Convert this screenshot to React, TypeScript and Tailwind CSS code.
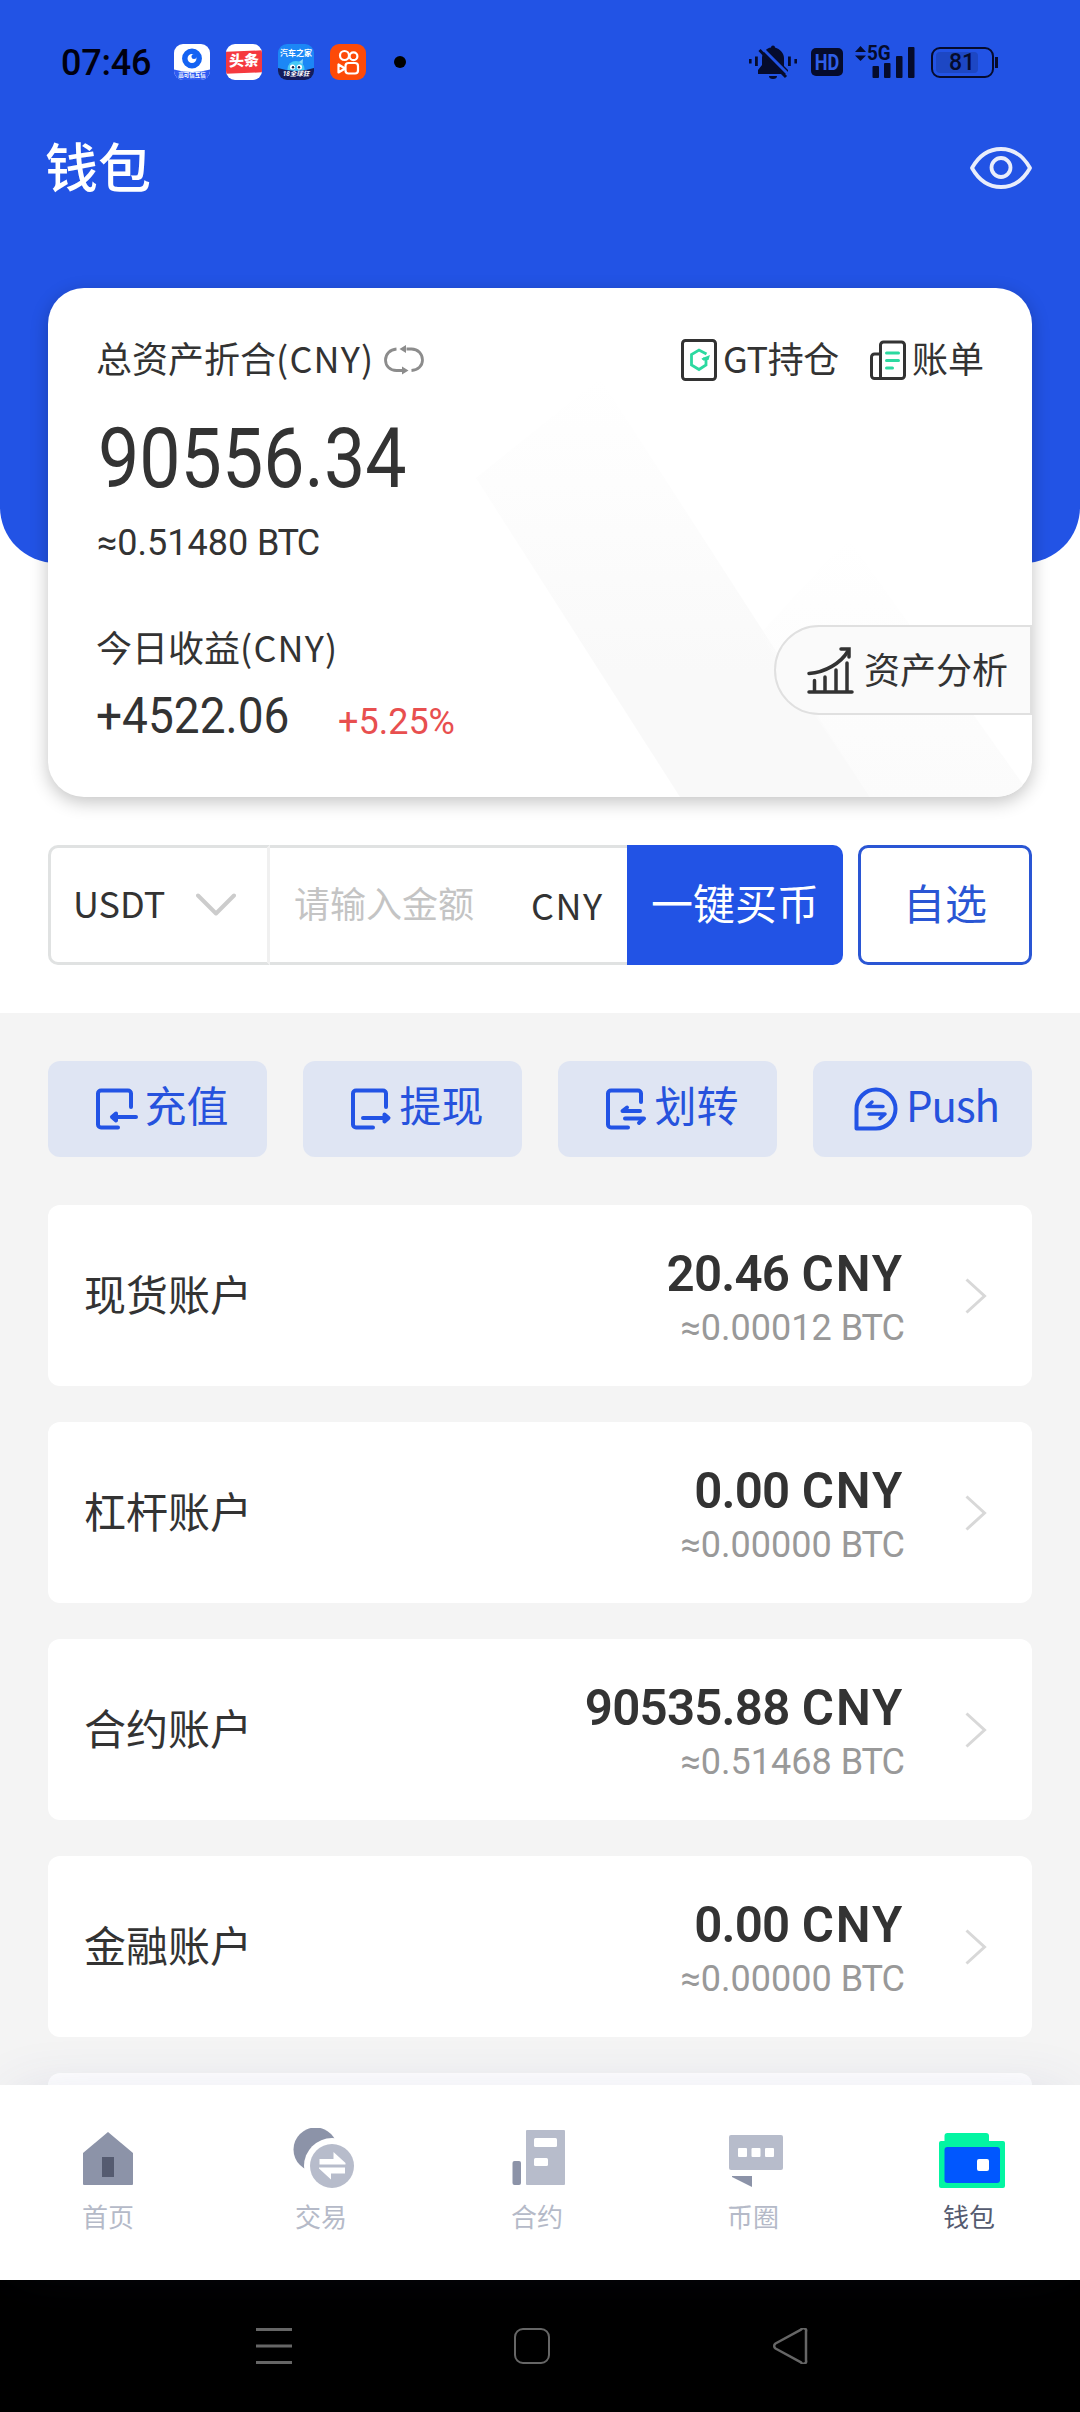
import type { ReactNode } from 'react';

const BLUE = '#2253e5';

const ACCOUNTS = [
  { name: '现货账户', amount: '20.46', btc: '≈0.00012 BTC' },
  { name: '杠杆账户', amount: '0.00', btc: '≈0.00000 BTC' },
  { name: '合约账户', amount: '90535.88', btc: '≈0.51468 BTC' },
  { name: '金融账户', amount: '0.00', btc: '≈0.00000 BTC' },
];

/* ---------- status bar ---------- */

function AppBadges() {
  return (
    <div className="flex items-center gap-4">
      <div className="relative h-9 w-9 overflow-hidden rounded-[9px] bg-white">
        <svg className="h-9 w-9" viewBox="0 0 36 36">
          <circle cx="18" cy="14.500" r="7.200" fill="none" stroke="#1463f3" strokeWidth="5.500" />
          <circle cx="20" cy="12.500" r="2.500" fill="#1463f3" />
          <path d="M0 25.500q18 5 36 0V36H0z" fill="#2f5bf2" />
        </svg>
        <div className="absolute inset-x-0 bottom-0 text-center text-[5.5px] leading-[9px] font-bold whitespace-nowrap text-white">高可信互信</div>
      </div>
      <div className="flex h-9 w-9 items-center overflow-hidden rounded-[9px] bg-white">
        <div className="flex h-[22px] w-9 shrink-0 -skew-y-2 justify-center bg-[#f5393f] text-[15px] leading-[21px] font-black whitespace-nowrap text-white">头条</div>
      </div>
      <div className="flex h-9 w-9 flex-col items-center overflow-hidden rounded-[9px] bg-[#1c87f6]">
        <div className="mt-1 h-[11px] shrink-0 text-[8px] leading-[11px] font-bold whitespace-nowrap text-white">汽车之家</div>
        <svg className="h-[12px] w-9 shrink-0" viewBox="0 0 36 12">
          <ellipse cx="18" cy="10" rx="8.500" ry="8" fill="#45c8f5" />
          <path d="M21 3 25 0l-.5 5z" fill="#8fdcf8" />
          <circle cx="14.500" cy="8" r="2.600" fill="#fff" />
          <circle cx="21.500" cy="8" r="2.600" fill="#fff" />
          <circle cx="15" cy="8.300" r="1.200" fill="#10204a" />
          <circle cx="21" cy="8.300" r="1.200" fill="#10204a" />
          <path d="M0 9q18 6 36 0v3H0z" fill="#141c5c" />
        </svg>
        <div className="h-[10px] w-9 shrink-0 bg-[#141c5c] text-center text-[6.5px] leading-[7px] font-bold text-white italic">18全球狂</div>
      </div>
      <svg className="h-9 w-9" viewBox="0 0 36 36" fill="none" stroke="#fff" strokeWidth="2.2">
        <rect width="36" height="36" rx="9" fill="#fd4a08" stroke="none" />
        <circle cx="14.500" cy="11.500" r="4.500" />
        <circle cx="23.500" cy="12.200" r="3.900" />
        <rect x="15.500" y="19" width="12.500" height="10.500" rx="3" />
        <path d="M15 24.500 8.500 20.500v8z" strokeLinejoin="round" />
      </svg>
    </div>
  );
}

function StatusBar() {
  return (
    <div className="flex h-[124px] items-center pr-[82px] pl-[61px] text-[#000010]">
      <span className="w-[113px] pt-0.5 text-4xl font-medium tracking-[-0.2px]">07:46</span>
      <AppBadges />
      <div className="ml-7 h-3 w-3 rounded-full bg-black" />

      <svg className="ml-auto h-[34px] w-12" viewBox="0 0 48 34" fill="#050b2c">
        <path d="M9 29v-4l4-5v-7C13 7 18 3 22 2.500a2 2 0 0 1 4 0C31 4 35 8 35 13v8l4 4v4z" />
        <path d="M20 31h8a4 3 0 0 1-8 0z" />
        <rect x="0" y="14" width="2.600" height="4.500" />
        <rect x="6" y="11.500" width="2.800" height="9.500" />
        <rect x="39" y="11.500" width="2.800" height="9.500" />
        <rect x="45.400" y="14" width="2.600" height="4.500" />
        <path d="M13 3 41 31" stroke={BLUE} strokeWidth="3" />
        <path d="M10.500 5 37 32" stroke="#050b2c" strokeWidth="3" />
      </svg>

      <div className="ml-3.5 flex h-7 w-8 justify-center rounded-[5px] bg-[#050b2c] font-[Roboto] text-[22px] leading-[29px] font-bold text-[#2f5fe8]">
        <span className="inline-block scale-x-[0.82]">HD</span>
      </div>

      <div className="relative ml-3 h-[34px] w-[61px]">
        <svg className="h-[34px] w-[61px]" viewBox="0 0 61 34" fill="#050b2c">
          <path d="M0 7 5.500 1 11 7z" />
          <path d="M0 10.500h11L5.500 16z" />
          <rect x="17.500" y="21" width="6.500" height="12" rx="1" />
          <rect x="29" y="18" width="6.500" height="15" rx="1" />
          <rect x="41" y="11" width="6.500" height="22" rx="1" />
          <rect x="53" y="2" width="6.500" height="31" rx="1" />
        </svg>
        <span className="absolute top-0 left-3 origin-left scale-x-90 font-[Roboto] text-[21px] leading-[17px] font-bold text-[#050b2c]">5G</span>
      </div>

      <div className="ml-[15px] flex items-center gap-px">
        <div className="flex h-[31px] w-[63px] items-center rounded-[9px] border-2 border-[#050b2c] p-[3px]">
          <div className="h-full w-[42px] rounded-[4px] bg-[#1d47c4] pl-[13px] font-[Roboto] text-[23px] leading-[22px] font-medium text-[#050b2c]">
            81
          </div>
        </div>
        <div className="h-[11px] w-[3px] bg-[#050b2c]" />
      </div>
    </div>
  );
}

/* ---------- asset card ---------- */

function CardPattern() {
  return (
    <svg className="absolute inset-0 h-full w-full" viewBox="0 0 984 509">
      <defs>
        <linearGradient id="bandA" x1="0" y1="0" x2="0" y2="1">
          <stop offset="0" stopColor="#f9f9f9" stopOpacity="0" />
          <stop offset="0.300" stopColor="#f9f9f9" stopOpacity="0.400" />
          <stop offset="0.700" stopColor="#f9f9f9" />
          <stop offset="1" stopColor="#f9f9f9" />
        </linearGradient>
        <linearGradient id="bandB" x1="0" y1="0" x2="0" y2="1">
          <stop offset="0" stopColor="#fbfbfb" stopOpacity="0" />
          <stop offset="1" stopColor="#fbfbfb" />
        </linearGradient>
      </defs>
      <path d="M552 90 822 509H632L428 190z" fill="url(#bandA)" />
      <path d="M822 509 712 346 800 250 984 509z" fill="url(#bandB)" />
    </svg>
  );
}

function AssetCard() {
  return (
    <section className="relative mx-12 -mt-[275px] h-[509px] rounded-[36px] bg-white text-[#333] shadow-[0_5px_18px_rgba(0,0,0,0.24)]">
      <div className="absolute inset-0 overflow-hidden rounded-[36px]">
        <CardPattern />
      </div>
      <div className="relative flex h-full flex-col">
        <div className="mt-[45px] flex h-[54px] items-center pr-12 pl-12 text-4xl">
          <span className="-mt-1.5 w-[288px] whitespace-nowrap">
            总资产折合<span className="tracking-[1.2px]">(CNY)</span>
          </span>
          <svg className="h-[30px] w-10" viewBox="0 0 40 30" fill="none" stroke="#8c8c8c" strokeWidth="2.800">
            <path d="M12.500 4C6 4.500 1.500 9 1.500 15c0 6 4.500 10.500 11 10.500h6" />
            <path d="M27.500 25.500C34 25 38.500 21 38.500 15c0-6-4.500-11-11-11h-5" />
            <path d="M15.500 4 22 0v8z" fill="#8c8c8c" stroke="none" />
            <path d="M24.500 25.500 18 21.500v8z" fill="#8c8c8c" stroke="none" />
          </svg>

          <svg className="ml-auto h-[42px] w-9" viewBox="0 0 36 42" fill="none">
            <rect x="1.500" y="1.500" width="33" height="39" rx="3" stroke="#333" strokeWidth="3" />
            <path d="M25.500 15 18 11 10.500 15.500v10.500L18 30.500l7-4.500v-6h-3" stroke="#2cd9a0" strokeWidth="2.800" />
            <path d="M20.500 19.500 29 16l-1.500 5h-6z" fill="#2cd9a0" />
          </svg>
          <span className="-mt-1.5 ml-1.5 w-[117px] tracking-[-0.4px] whitespace-nowrap">GT持仓</span>
          <svg className="ml-[30px] h-[40px] w-9" viewBox="0 0 36 40" fill="none" strokeWidth="3">
            <path d="M10.500 14H4.500a3 3 0 0 0-3 3v18.500a3 3 0 0 0 3 3h27a3 3 0 0 0 3-3V5a3 3 0 0 0-3-3h-18a3 3 0 0 0-3 3v33" stroke="#333" />
            <path d="M16.500 13h12M16.500 20.500h12M16.500 28h6" stroke="#2cd9a0" strokeLinecap="round" />
          </svg>
          <span className="-mt-1.5 ml-1.5">账单</span>
        </div>

        <div className="mt-[24px] ml-[50px] h-[96px] origin-left scale-x-[0.875] font-[Roboto] text-[84px] leading-[96px] font-[450]">
          90556.34
        </div>
        <div className="mt-[15px] ml-[49px] h-[42px] font-[Roboto] text-4xl leading-[42px]">
          ≈0.51480 <span className="tracking-[-1.6px]">BTC</span>
        </div>

        <div className="mt-[56px] flex items-start justify-between">
          <div className="pl-12">
            <div className="h-[54px] text-4xl leading-[53px]">
              今日收益<span className="tracking-[1.2px]">(CNY)</span>
            </div>
            <div className="mt-[12px] flex h-[60px] font-[Roboto]">
              <span className="w-[242px] origin-left scale-x-[0.92] text-[50px] leading-[60px]">+4522.06</span>
              <span className="pt-[6px] text-4xl leading-[60px] text-[#e84f4f]">+5.25%</span>
            </div>
          </div>
          <div className="mt-[5px] flex h-[90px] w-[258px] items-center rounded-l-full border-2 border-[#e0e0e0] bg-[#fafafa] pl-[31px]">
            <svg className="h-[47px] w-[47px]" viewBox="0 0 47 47" fill="none" stroke="#333" strokeWidth="3.500" strokeLinecap="round">
              <path d="M2 45h43M7.500 45V33.500M18 45V30M29 45V23M40 45V16" />
              <path d="M2 26.500C18 25.500 34 16 41 4" />
              <path d="M34 2h8v8" />
            </svg>
            <span className="-mt-1 ml-[10px] text-4xl">资产分析</span>
          </div>
        </div>
      </div>
    </section>
  );
}

/* ---------- quick buy ---------- */

function QuickBuy() {
  return (
    <section className="mx-12 mt-12 flex h-[120px] text-4xl text-[#333]">
      <div className="flex w-[222px] items-center rounded-l-[10px] border-[3px] border-[#e0e2e2] border-r-[#f0f0f0] pl-[22px]">
        <span className="-mt-1.5 w-[123px]">USDT</span>
        <svg className="h-6 w-10" viewBox="0 0 40 24" fill="none" stroke="#ccc" strokeWidth="4" strokeLinecap="round" strokeLinejoin="round">
          <path d="M2 2.500 20 20.500 38 2.500" />
        </svg>
      </div>
      <div className="flex w-[357px] items-center border-y-[3px] border-[#e0e2e2] pl-6">
        <span className="-mt-1.5 w-[237px] text-[#c4c4c4]">请输入金额</span>
        <span className="-mt-0.5 tracking-[1.5px]">CNY</span>
      </div>
      <button className="w-[216px] rounded-r-[10px] bg-[#2253e5] pb-1.5 text-[42px] leading-none text-white">一键买币</button>
      <button className="ml-[15px] w-[174px] rounded-[10px] border-[3px] border-[#2a56d4] pb-1.5 text-[42px] leading-none text-[#2a56d4]">自选</button>
    </section>
  );
}

/* ---------- actions ---------- */

function ActionButton({ icon, label }: { icon: ReactNode; label: string }) {
  return (
    <button className="flex h-24 flex-1 items-center justify-center rounded-[12px] bg-[#dfe5f3] pl-2 text-[42px] leading-none text-[#2652dd]">
      {icon}
      <span className={label === 'Push' ? '-mt-2.5 tracking-[-1px]' : '-mt-2.5'}>{label}</span>
    </button>
  );
}

function Actions() {
  const common = { viewBox: '0 0 44 44', fill: 'none', stroke: BLUE, strokeWidth: 4, strokeLinecap: 'round', strokeLinejoin: 'round' } as const;
  return (
    <div className="flex gap-9">
      <ActionButton
        label="充值"
        icon={
          <svg {...common} className="mr-1.5 h-11 w-11">
            <path d="M37 20V6.500a3 3 0 0 0-3-3H7a3 3 0 0 0-3 3v31a3 3 0 0 0 3 3h17" />
            <path d="M42 30H18M22 26.500 18 30l4 3.500z" />
          </svg>
        }
      />
      <ActionButton
        label="提现"
        icon={
          <svg {...common} className="mr-1.5 h-11 w-11">
            <path d="M37 20V6.500a3 3 0 0 0-3-3H7a3 3 0 0 0-3 3v31a3 3 0 0 0 3 3h17" />
            <path d="M14 31h25M35.500 27.500 39.500 31l-4 3.500z" />
          </svg>
        }
      />
      <ActionButton
        label="划转"
        icon={
          <svg {...common} className="mr-1.5 h-11 w-11">
            <path d="M37 15V6.500a3 3 0 0 0-3-3H7a3 3 0 0 0-3 3v31a3 3 0 0 0 3 3h17" />
            <path d="M36 24H18.500L23 20.500M21 31.500h19L35 36" />
          </svg>
        }
      />
      <ActionButton
        label="Push"
        icon={
          <svg {...common} className="mr-2 h-11 w-11">
            <path d="M2.500 41.500V22A19.500 19.500 0 1 1 22 41.500z" />
            <path d="M29 19.500H13l5-4.500M15 27h16l-5 4.500" strokeWidth="3.500" />
          </svg>
        }
      />
    </div>
  );
}

/* ---------- account list ---------- */

function AccountRow({ name, amount, btc }: { name: string; amount: string; btc: string }) {
  return (
    <div className="flex h-[181px] shrink-0 items-center rounded-[12px] bg-white pr-[45px] pl-9">
      <span className="-mt-1.5 text-[42px] leading-none text-[#333]">{name}</span>
      <div className="ml-auto flex flex-col items-end pt-1.5 font-[Roboto]">
        <span className="h-[57px] origin-right scale-x-[0.985] text-[50px] leading-[57px] font-semibold text-[#333]">
          <span className="tracking-[-0.8px]">{amount}</span> <span className="tracking-[2px]">CNY</span>
        </span>
        <span className="h-[49px] text-4xl leading-[50px] text-[#999]">
          {btc.slice(0, -3)}
          <span className="tracking-[-1px]">{btc.slice(-3)}</span>
        </span>
      </div>
      <svg className="ml-[61px] h-9 w-[22px]" viewBox="0 0 22 36" fill="none" stroke="#d8d8d8" strokeWidth="3">
        <path d="M1.500 1.500 19.500 18 1.500 34.500" />
      </svg>
    </div>
  );
}

/* ---------- bottom tabs ---------- */

function Tab({ label, active, first, children }: { label: string; active?: boolean; first?: boolean; children: ReactNode }) {
  return (
    <div className="flex w-[216px] flex-col items-center pt-[43px]">
      <svg className="h-[62px] w-[72px]" viewBox="0 0 72 62">
        {children}
      </svg>
      <span
        className={`mt-[7px] text-[26px] leading-[38px] ${first ? '' : 'pr-1.5'} ${active ? 'text-[#555b70]' : 'text-[#b5bac8]'}`}
      >
        {label}
      </span>
    </div>
  );
}

function TabBar() {
  return (
    <nav className="relative flex h-[195px] shrink-0 bg-white shadow-[0_-4px_60px_-16px_rgba(60,70,140,0.16)]">
      <Tab label="首页" first>
        <path d="M36 4 61 25v31a1 1 0 0 1-1 1H12a1 1 0 0 1-1-1V25z" fill="#8c93a8" />
        <rect x="30" y="29" width="12" height="20" fill="#555b70" />
      </Tab>
      <Tab label="交易">
        <circle cx="27.500" cy="21.500" r="22" fill="#8c93a8" />
        <circle cx="44" cy="38" r="28" fill="#fff" />
        <circle cx="44" cy="38" r="22" fill="#b7bccb" />
        <path d="M31.500 31h14v-7L57.500 35v1.500h-26z" fill="#fff" />
        <path d="M57 45.500H43v6L31 40.500V39.500h26z" fill="#fff" />
      </Tab>
      <Tab label="合约">
        <rect x="8.500" y="33" width="8.500" height="24" rx="2" fill="#8c93a8" />
        <rect x="22" y="2" width="39" height="55" rx="1" fill="#b7bccb" />
        <rect x="30" y="10" width="23" height="9" rx="1.500" fill="#fff" />
        <rect x="30" y="30" width="14" height="8" rx="1.500" fill="#fff" />
      </Tab>
      <Tab label="币圈">
        <rect x="9" y="7" width="54" height="35" rx="2" fill="#b7bccb" />
        <rect x="18" y="20" width="9" height="9" rx="1" fill="#fff" />
        <rect x="31.500" y="20" width="9" height="9" rx="1" fill="#fff" />
        <rect x="45" y="20" width="9" height="9" rx="1" fill="#fff" />
        <path d="M12 48h20v11L12 49z" fill="#8c93a8" />
      </Tab>
      <Tab label="钱包" active>
        <rect x="8.500" y="5" width="44.500" height="16" rx="3" fill="#03f5a2" />
        <rect x="3" y="13" width="66" height="47" rx="2" fill="#03f5a2" />
        <rect x="8.500" y="19" width="55.500" height="36" rx="3" fill="#0057ff" />
        <rect x="41" y="31" width="12" height="12" rx="2" fill="#fff" />
      </Tab>
    </nav>
  );
}

function SystemNav() {
  return (
    <div className="flex h-[132px] shrink-0 items-center bg-black pl-64">
      <svg className="h-9 w-9" viewBox="0 0 36 36" stroke="#666" strokeWidth="3">
        <path d="M0 1.500h36M0 18h36M0 34.500h36" />
      </svg>
      <div className="ml-[222px] h-9 w-9 rounded-[9px] border-[2.5px] border-[#666]" />
      <svg className="ml-[222px] h-9 w-9" viewBox="0 0 36 36" fill="none" stroke="#666" strokeWidth="2.500" strokeLinejoin="round">
        <path d="M29 1.700 3.500 15.500a3 3 0 0 0 0 5L29 34.300a2.700 2.700 0 0 0 5-2V3.700a2.700 2.700 0 0 0-5-2z" />
      </svg>
    </div>
  );
}

export default function App() {
  return (
    <div className="flex h-[2412px] w-[1080px] flex-col overflow-hidden bg-white font-['Noto_Sans_CJK_SC',sans-serif]">
      <main className="flex min-h-0 flex-1 flex-col overflow-hidden">
        <header className="h-[563px] shrink-0 rounded-b-[56px] bg-[#2253e5] font-['Roboto','Noto_Sans_CJK_SC',sans-serif]">
          <StatusBar />
          <div className="flex h-[88px] items-center justify-between pr-12 pl-[45px]">
            <h1 className="pt-1 text-[53px] leading-[88px] font-medium text-white">钱包</h1>
            <svg className="h-[42px] w-[62px]" viewBox="0 0 62 42" fill="none" stroke="#e9edfb" strokeWidth="3.800">
              <path d="M2 21C9 8.500 19 2 31 2s22 6.500 29 19C53 33.500 43 40 31 40S9 33.500 2 21z" strokeLinejoin="round" />
              <circle cx="31" cy="20.500" r="9.500" />
            </svg>
          </div>
        </header>

        <AssetCard />
        <QuickBuy />

        <div className="mt-12 flex min-h-0 flex-1 flex-col gap-12 overflow-hidden bg-[#f4f4f4] px-12 pt-12">
          <Actions />
          <div className="flex flex-col gap-9">
            {ACCOUNTS.map((account) => (
              <AccountRow key={account.name} {...account} />
            ))}
            <div className="h-[181px] shrink-0 rounded-[12px] bg-white" />
          </div>
        </div>
      </main>

      <TabBar />
      <SystemNav />
    </div>
  );
}
